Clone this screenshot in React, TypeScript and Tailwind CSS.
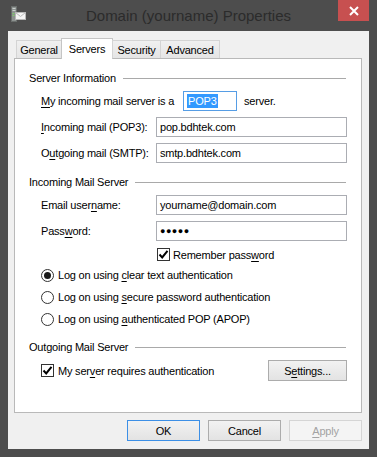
import React from "react";

const U = ({ children }: { children: React.ReactNode }) => (
  <span className="underline underline-offset-[2px] decoration-[1px]">{children}</span>
);

const Check = () => (
  <span className="w-[13px] h-[13px] border border-[#333333] bg-white flex items-center justify-center shrink-0">
    <svg width="11" height="11" viewBox="0 0 11 11">
      <path d="M1.5 5.5 L4.2 8.4 L9.5 1.8" fill="none" stroke="#000" strokeWidth="2" />
    </svg>
  </span>
);

const Radio = ({ on }: { on?: boolean }) => (
  <span className="w-[13px] h-[13px] rounded-full border border-[#333333] bg-white flex items-center justify-center shrink-0">
    {on && <span className="w-[7px] h-[7px] rounded-full bg-[#1a1a1a]" />}
  </span>
);

const GroupHeader = ({ title }: { title: string }) => (
  <div className="flex items-center h-[14px]">
    <span>{title}</span>
    <div className="flex-1 h-px bg-[#a9a9a9] ml-[7px] mr-px" />
  </div>
);

const Field = ({ label, value }: { label: React.ReactNode; value: React.ReactNode }) => (
  <div className="flex items-center mt-[6px] h-[20px]">
    <div className="w-[115px]">{label}</div>
    <div className="flex-1 h-[20px] border border-[#abadb3] bg-white flex items-center pl-[3px]">
      {value}
    </div>
  </div>
);

const Btn = ({
  children,
  kind,
  w = "w-[73px]",
}: {
  children: React.ReactNode;
  kind?: "default" | "disabled";
  w?: string;
}) => (
  <div
    className={
      w +
      " h-[21px] flex items-center justify-center border " +
      (kind === "default"
        ? "border-[#3c8fe6] bg-gradient-to-b from-[#f2f2f2] to-[#e3e3e3]"
        : kind === "disabled"
        ? "border-[#d5d5d5] bg-[#f4f4f4] text-[#a3a3a3]"
        : "border-[#acacac] bg-gradient-to-b from-[#f2f2f2] to-[#e3e3e3]")
    }
  >
    {children}
  </div>
);

const App: React.FC = () => {
  const tabs = [
    { name: "General", w: "w-[46px]" },
    { name: "Servers", w: "w-[52px]", sel: true },
    { name: "Security", w: "w-[49px]" },
    { name: "Advanced", w: "w-[60px]" },
  ];

  return (
    <div className="w-[377px] h-[457px] bg-[#4d4d4d] flex flex-col font-['Liberation_Sans',Arial,sans-serif] text-[11px] tracking-[-0.2px] text-black leading-[14px]">
      {/* title bar */}
      <div className="h-[31px] grid grid-cols-[1fr_auto_1fr] items-start">
        <div className="pl-[10px] pt-[6px]">
          <svg width="17" height="17" viewBox="0 0 17 17">
            <rect x="1.5" y="0.5" width="5" height="15" fill="#8d9290" stroke="#6a6e6c" />
            <rect x="2.5" y="2" width="3" height="1" fill="#c8cfcc" />
            <rect x="2.5" y="4" width="3" height="1" fill="#c8cfcc" />
            <rect x="2.5" y="7" width="2" height="1" fill="#7fcf6a" />
            <rect x="2.5" y="9" width="2" height="1" fill="#7fcf6a" />
            <rect x="5.5" y="6.5" width="10" height="7" fill="#f4f4f4" stroke="#b8b8b8" />
            <path d="M5.5 6.5 L10.5 10.5 L15.5 6.5" fill="none" stroke="#b8b8b8" />
          </svg>
        </div>
        <div className="pt-[6px] text-[15px] leading-[20px] tracking-normal text-[#2b2b2b]">
          Domain (yourname) Properties
        </div>
        <div className="flex justify-end pr-[8px]">
          <div className="w-[31px] h-[21px] bg-[#c75050] flex items-center justify-center">
            <svg width="10" height="10" viewBox="0 0 10 10">
              <path d="M1 1 L9 9 M9 1 L1 9" stroke="#fff" strokeWidth="2" />
            </svg>
          </div>
        </div>
      </div>

      {/* client */}
      <div className="mx-[8px] h-[418px] bg-[#f0f0f0] flex flex-col pl-[6px] pr-[7px] pt-[7px]">
        {/* tabs */}
        <div className="flex items-end h-[21px] pl-[2px] -mb-px relative z-10">
          {tabs.map((t) =>
            t.sel ? (
              <div
                key={t.name}
                className={t.w + " h-[21px] -ml-px bg-white border border-b-0 border-[#c5c5c5] flex justify-center pt-[3px]"}
              >
                {t.name}
              </div>
            ) : (
              <div
                key={t.name}
                className={t.w + " h-[18px] mb-px -ml-px first:ml-0 bg-gradient-to-b from-[#f0f0f0] to-[#e5e5e5] border border-b-0 border-[#d4d4d4] flex justify-center pt-[2px]"}
              >
                {t.name}
              </div>
            )
          )}
        </div>

        {/* panel */}
        <div className="h-[355px] bg-white border border-[#b9b9b9] pl-[14px] pr-[14px] pt-[12px]">
          <GroupHeader title="Server Information" />
          <div className="pl-[12px]">
            <div className="flex items-center mt-[6px] h-[20px]">
              <div className="w-[142px]">
                <U>M</U>y incoming mail server is a
              </div>
              <div className="w-[54px] h-[20px] border border-[#569de5] bg-white flex items-center pl-[3px]">
                <span className="bg-[#3399ff] text-white px-px leading-[14px]">POP3</span>
              </div>
              <div className="ml-[7px]">server.</div>
            </div>
            <Field label={<><U>I</U>ncoming mail (POP3):</>} value="pop.bdhtek.com" />
            <Field label={<>O<U>u</U>tgoing mail (SMTP):</>} value="smtp.bdhtek.com" />
          </div>

          <div className="mt-[12px]">
            <GroupHeader title="Incoming Mail Server" />
          </div>
          <div className="pl-[12px]">
            <Field label={<>Email user<U>n</U>ame:</>} value="yourname@domain.com" />
            <Field
              label={<>Pass<U>w</U>ord:</>}
              value={<span className="text-[9px] tracking-[0.5px]">●●●●●</span>}
            />
            <div className="flex items-center gap-[3px] mt-[7px] h-[13px] pl-[116px]">
              <Check />
              <span>
                Remember pass<U>w</U>ord
              </span>
            </div>
            <div className="mt-[3px]">
              <div className="h-[22px] flex items-center gap-[4px]">
                <Radio on />
                <span>
                  Log on using <U>c</U>lear text authentication
                </span>
              </div>
              <div className="h-[22px] flex items-center gap-[4px]">
                <Radio />
                <span>
                  Log on using <U>s</U>ecure password authentication
                </span>
              </div>
              <div className="h-[22px] flex items-center gap-[4px]">
                <Radio />
                <span>
                  Log on using <U>a</U>uthenticated POP (APOP)
                </span>
              </div>
            </div>
          </div>

          <div className="mt-[10px]">
            <GroupHeader title="Outgoing Mail Server" />
          </div>
          <div className="pl-[12px] mt-[6px] h-[21px] flex items-center justify-between">
            <div className="flex items-center gap-[4px]">
              <Check />
              <span>
                My ser<U>v</U>er requires authentication
              </span>
            </div>
            <Btn w="w-[79px]">
              <span>
                S<U>e</U>ttings...
              </span>
            </Btn>
          </div>
        </div>

        {/* buttons */}
        <div className="mt-[7px] flex justify-end gap-[8px]">
          <Btn kind="default">OK</Btn>
          <Btn>Cancel</Btn>
          <Btn kind="disabled">
            <span>
              <U>A</U>pply
            </span>
          </Btn>
        </div>
      </div>
    </div>
  );
};

export default App;
